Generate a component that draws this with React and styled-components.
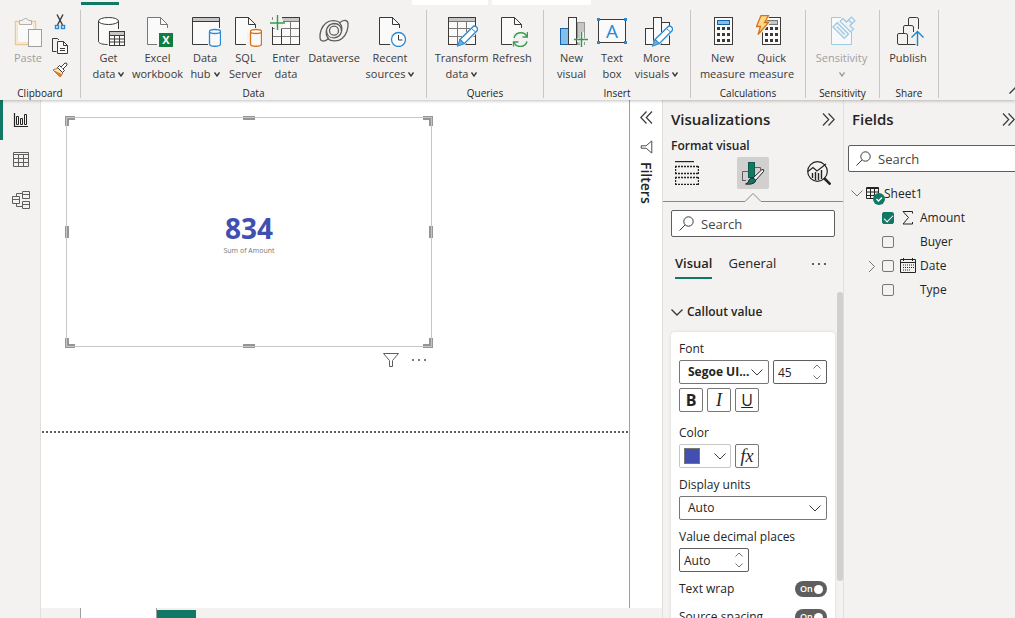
import React, { useState } from "react";
import styled, { createGlobalStyle } from "styled-components";

const GlobalStyle = createGlobalStyle`
  * { box-sizing: border-box; }
  body {
    margin: 0;
    background: #f3f2f1;
    color: #252423;
    font-family: "Open Sans", "Noto Sans", sans-serif;
    font-size: 12px;
    line-height: 16px;
  }
  button, input, select { font: inherit; color: inherit; }
  button { padding: 0; border: 0; background: none; cursor: pointer; }
  svg { display: block; flex: none; }
`;

const DARK = "#3b3a39";
const GREEN = "#117865";

/* ---------- icons ---------- */

const Svg = ({ w = 32, h = w, children, ...rest }) => (
  <svg width={w} height={h} viewBox={`0 0 ${w} ${h}`} fill="none" stroke={DARK} aria-hidden="true" {...rest}>
    {children}
  </svg>
);

const Chevron = ({ w = 12, h = 7, color = DARK, width = 1 }) => (
  <Svg w={w} h={h} stroke={color} strokeWidth={width}>
    <path d={`M0.5 0.5 L${w / 2} ${h - 1} L${w - 0.5} 0.5`} />
  </Svg>
);

const DoubleChevron = ({ left }) => (
  <Svg w={13} h={13} strokeWidth="1.2">
    {left
      ? <path d="M6.5 0.5 L0.8 6.5 L6.5 12.5 M12 0.5 L6.3 6.5 L12 12.5" />
      : <path d="M1 0.5 L6.7 6.5 L1 12.5 M6.5 0.5 L12.2 6.5 L6.5 12.5" />}
  </Svg>
);

const Page = ({ stroke = DARK, cut }) => (
  <>
    <path d="M5.5 2.5 H18.5 L25.5 9.5 V18 H17 V29.5 H5.5 Z" fill="#fafafa" stroke="none" />
    <path d={`M${cut || 16} 29.5 H5.5 V2.5 H18.5 L25.5 9.5 V13 M18.5 2.5 V9.5 H25.5`} stroke={stroke} />
  </>
);

const Cylinder = ({ color }) => (
  <>
    <path d="M20.5 17 V29 C20.5 32 31.5 32 31.5 29 V17" fill="#fafafa" stroke={color} strokeWidth="1.3" />
    <ellipse cx="26" cy="16.5" rx="5.5" ry="2" fill="#fff" stroke={color} strokeWidth="1.3" />
  </>
);

const Table = () => (
  <>
    <rect x="2.5" y="2.5" width="27" height="27" fill="#fafafa" />
    <rect x="3" y="3" width="26" height="3" fill="#c8c6c4" stroke="none" />
    <path d="M2.5 6.5 H29.5 M2.5 13.5 H29.5 M2.5 21.5 H29.5 M11.5 6.5 V29.5 M20.5 6.5 V29.5" stroke="#797775" />
    <rect x="2.5" y="2.5" width="27" height="27" />
  </>
);

const Pencil = () => (
  <>
    <path d="M13 24.5 L26 11.5 L32 17 L18 31 L11 32 Z" fill="#f3f2f1" stroke="none" />
    <path d="M14 24.5 L26.5 12.2 A2.7 2.7 0 0 1 30.8 16 L18.2 28.7 Z" fill="#fff" stroke="#2b88d0" strokeWidth="1.3" />
    <path d="M14 24.5 L18.2 28.7 L11.3 31.3 Z" fill="#69afe5" stroke="#2b88d0" />
    <path d="M25.5 13.5 L29.5 17" stroke="#2b88d0" />
  </>
);

const Keys = ({ x = 10 }) => (
  <path
    d={[12, 18, 24].map((y) => `M${x} ${y}h3v3h-3z M${x + 5} ${y}h3v3h-3z M${x + 10} ${y}h3v3h-3z`).join(" ")}
    fill={DARK}
    stroke="none"
  />
);

const ribbonIcons = {
  paste: (
    <Svg>
      <path d="M3.5 6.5 H23.5 V29.5 H3.5 Z" fill="#fbf4e9" stroke="#eac796" strokeWidth="1.4" />
      <path d="M5.5 8.5 H21.5 V27.5 H5.5 Z" fill="#fafafa" stroke="#f5e3c6" />
      <path d="M7.5 9.5 V5.5 H10.5 A3.2 3.2 0 0 1 16.5 5.5 H19.5 V9.5 Z" fill="#f3f2f1" stroke="#b3b0ad" />
      <rect x="16.5" y="14.5" width="13" height="17" fill="#fafafa" stroke="#a19f9d" />
    </Svg>
  ),
  database: (
    <Svg>
      <path d="M5.5 6 V26.5 C6 29 10 30 14.5 30 V17 H25.5 V6" fill="#fafafa" stroke="none" />
      <path d="M5.5 6 V26.5 C6 28.6 10 29.5 14.5 29.5 M25.5 6 V14" />
      <ellipse cx="15.5" cy="6" rx="10" ry="3.5" fill="#fff" />
      <rect x="16.5" y="16.5" width="15" height="14" fill="#fafafa" />
      <rect x="17" y="17" width="14" height="3" fill="#c8c6c4" stroke="none" />
      <path d="M16.5 20.5 H31.5 M16.5 24 H31.5 M16.5 27 H31.5 M21.5 20.5 V30.5 M26.5 20.5 V30.5" />
    </Svg>
  ),
  excel: (
    <Svg>
      <Page stroke="#797775" cut={15} />
      <rect x="17" y="18" width="14" height="14" fill="#107c41" stroke="none" />
      <text x="24" y="29" textAnchor="middle" fontSize="11" fontWeight="700" fill="#fff" stroke="none">X</text>
    </Svg>
  ),
  hub: (
    <Svg>
      <path d="M19 29.5 H3.5 V2.5 H30.5 V13" fill="#fafafa" />
      <rect x="4" y="3" width="26" height="3" fill="#c8c6c4" stroke="none" />
      <path d="M3.5 6.5 H30.5" />
      <Cylinder color="#2b88d0" />
    </Svg>
  ),
  sql: <Svg><Page /><Cylinder color="#d87314" /></Svg>,
  enter: (
    <Svg>
      <Table />
      <path d="M0 4.5 H13 V12 H0 Z M2 0 H12 V15 H5 Z" fill="#f3f2f1" stroke="none" />
      <path d="M2.5 14 V29.5 M11.5 13.5 V29.5" />
      <path d="M7.5 0 V15 M0 8 H15" stroke="#2f9e4c" strokeWidth="1.4" />
    </Svg>
  ),
  dataverse: (
    <Svg strokeWidth="1.3" stroke="#605e5c">
      <circle cx="16" cy="15.7" r="4.5" />
      <path d="M22.5 8 C19 5 12 4.5 8 8 C3.5 11.5 1.5 18 2 23 C2.5 27 7 27 10.5 23.5 C6.5 19 7.5 9.500 16 8.5 C21 8.5 23.5 12 23.5 16" />
      <path d="M9.5 23.4 C13 26.4 20 26.9 24 23.4 C28.5 19.9 30.5 13.4 30 8.4 C29.5 4.4 25 4.4 21.5 7.9 C25.5 12.4 24.5 21.9 16 22.9 C11 22.9 8.5 19.4 8.5 15.4" />
    </Svg>
  ),
  recent: (
    <Svg>
      <Page />
      <circle cx="24.5" cy="24.5" r="7" fill="#fff" stroke="#2b88d0" strokeWidth="1.3" />
      <path d="M24.5 20 V25 H28.5" />
    </Svg>
  ),
  transform: <Svg><Table /><Pencil /></Svg>,
  refresh: (
    <Svg>
      <Page />
      <path d="M18 23 A7 7 0 0 1 31 21.5 M31.5 17 V22 H26.5 M31 26.5 A7 7 0 0 1 18 27.5 M17.5 31.5 V27 H22.5" stroke="#3a9b52" strokeWidth="1.4" />
    </Svg>
  ),
  newVisual: (
    <Svg>
      <rect x="4.5" y="13.5" width="8" height="16" fill="#83beec" stroke="#1664a7" />
      <rect x="21.5" y="7.5" width="7" height="22" fill="#c8c6c4" stroke="#979593" />
      <rect x="12.5" y="2.5" width="8" height="27" fill="#fafafa" />
      <path d="M17 23 H24 V17 H28 V23 H32 V27 H28 V32 H24 V27 H17 Z" fill="#f3f2f1" stroke="none" />
      <path d="M20.5 20 V29.5" />
      <path d="M25.5 17 V32 M18 24.5 H32" stroke="#2f9e4c" strokeWidth="1.4" />
    </Svg>
  ),
  textBox: (
    <Svg>
      <rect x="2.5" y="4.5" width="27" height="23" fill="#fafafa" />
      <path d="M1 3h3v3h-3z M28 3h3v3h-3z M1 26h3v3h-3z M28 26h3v3h-3z" fill="#2b88d0" stroke="none" />
      <text x="16" y="23" textAnchor="middle" fontSize="19" fill="#2b88d0" stroke="none">A</text>
    </Svg>
  ),
  moreVisuals: (
    <Svg>
      <rect x="4.5" y="13.5" width="8" height="16" fill="#fafafa" />
      <rect x="20.5" y="7.5" width="8" height="22" fill="#fafafa" />
      <rect x="12.5" y="2.5" width="8" height="27" fill="#fafafa" />
      <Pencil />
    </Svg>
  ),
  newMeasure: (
    <Svg>
      <rect x="7.5" y="2.5" width="18" height="27" fill="#fafafa" />
      <rect x="10.5" y="5.5" width="12" height="4" fill="#83beec" stroke="#1664a7" />
      <Keys />
    </Svg>
  ),
  quickMeasure: (
    <Svg>
      <rect x="6.5" y="2.5" width="18" height="27" fill="#fafafa" />
      <rect x="10.5" y="5.5" width="11" height="4" fill="#c8c6c4" stroke="#797775" />
      <Keys x={9} />
      <path d="M4 -1 H15 L10 7 H15 L1 24 L4 14 H-2 Z" fill="#f3f2f1" stroke="none" />
      <path d="M5 0.5 H12.5 L8.5 7.5 H12.5 L2 19.5 L4.5 11.5 H0.5 Z" fill="#fcd98a" stroke="#d87314" strokeWidth="1.3" />
    </Svg>
  ),
  sensitivity: (
    <Svg stroke="#9ccae4">
      <path d="M15 2.5 H5.5 V29.5 H25.5 V17" fill="#f7f9fa" />
      <g transform="rotate(45 19 12)" strokeWidth="1.3">
        <rect x="10.5" y="14.5" width="16" height="6" fill="#f3f2f1" />
        <path d="M13 17.5 H24" />
        <path d="M11.5 11.5 V7.5 H16.5 V0.5 H21.5 V7.5 H26.5 V11.5 Z" fill="#f3f2f1" />
        <path d="M16.5 4.5 H21.5" />
      </g>
    </Svg>
  ),
  publish: (
    <Svg>
      <path d="M16.5 10 V4 Q16.5 2.5 18 2.5 H24.5 Q26.5 2.5 26.5 4 V14" />
      <path d="M11.5 18 V12 Q11.5 10.5 13 10.5 H19 Q21.5 10.5 21.5 12 V17" />
      <path d="M5.5 28 V20 Q5.5 18.5 7 18.5 H13.5 Q15.5 18.5 15.5 20 V29.5 H7 Q5.5 29.5 5.5 28 M15.5 29.5 H23.5" />
      <path d="M25.5 31 V16.5 M19.5 22.5 L25.5 16.5 L31.5 22.5" stroke="#1a86c8" strokeWidth="1.4" />
    </Svg>
  ),
};

const CutIcon = () => (
  <Svg w={16}>
    <path d="M5 0.5 L10.5 11 M11 0.5 L5.5 11" strokeWidth="1.4" />
    <rect x="3.5" y="11.5" width="3" height="3" fill="#fff" stroke="#2b88d0" strokeWidth="1.4" />
    <rect x="9.5" y="11.5" width="3" height="3" fill="#fff" stroke="#2b88d0" strokeWidth="1.4" />
  </Svg>
);

const CopyIcon = () => (
  <Svg w={16}>
    <path d="M4.5 13.5 H0.5 V0.5 H5.5 L7 2" />
    <path d="M5.5 3.5 H11.5 L15.5 7.5 V15.5 H5.5 Z" fill="#fafafa" />
    <path d="M11.5 3.5 V7.5 H15.5 M8 10.5 H13 M8 12.5 H13" />
  </Svg>
);

const BrushIcon = () => (
  <Svg w={16}>
    <path d="M1 8 L6 6 L11 11 L8 15 Z" fill="#fbe3c0" stroke="#d87314" />
    <path d="M3 9.5 L9.5 12.5 L8 15 Z" fill="#e8872a" stroke="#d87314" />
    <path d="M5.5 5.5 L7.5 3.5 L12.5 8.5 L10.5 10.5 Z" fill="#fff" />
    <path d="M9 5 L13 1 Q15.5 0.5 15 3 L11 7" fill="#fff" />
  </Svg>
);

const SearchIcon = () => (
  <Svg w={15}>
    <circle cx="9.5" cy="5.5" r="4.7" />
    <path d="M6 9 L0.5 14.5" />
  </Svg>
);

const FunnelIcon = ({ w = 16, color = "#605e5c" }) => (
  <Svg w={w} h={14} stroke={color} viewBox="0 0 16 14">
    <path d="M0.5 0.5 H15.5 L9.5 7.5 V13.5 H6.5 V7.5 Z" />
  </Svg>
);

const Dots = ({ color = "#605e5c" }) => (
  <Svg w={16} h={4} stroke="none" fill={color}>
    <path d="M1 1h2v2h-2z M7 1h2v2h-2z M13 1h2v2h-2z" />
  </Svg>
);

const ReportIcon = () => (
  <Svg w={16} stroke="#252423">
    <path d="M1.5 1 V14.5 H15" strokeWidth="1.2" />
    <path d="M3.5 4.5 h2 v8 h-2z M7.5 6.5 h2 v6 h-2z M11.5 2.5 h2 v10 h-2z" />
  </Svg>
);

const DataIcon = () => (
  <Svg w={16} stroke="#605e5c">
    <path d="M0.5 0.5 H15.5 V14.5 H0.5 Z M0.5 2.5 H15.5 M0.5 6.5 H15.5 M0.5 10.5 H15.5 M5.5 2.5 V14.5 M10.5 2.5 V14.5" />
  </Svg>
);

const ModelIcon = () => (
  <Svg w={18} stroke="#605e5c">
    <path d="M10.5 0.5 h7 v7 h-7z M10.5 3.5 h7 M10.5 10.5 h7 v7 h-7z M10.5 13.5 h7 M0.5 5.5 h7 v7 h-7z M0.5 8.5 h7 M4.5 5.5 V2.5 H10.5 M4.5 12.5 V15.5 H10.5" />
  </Svg>
);

const BuildIcon = () => (
  <Svg w={24} stroke="#252423">
    <path d="M0 0.5 H19" strokeWidth="1.4" />
    <path d="M0 5.5 H24 M0 12.5 H24 M0 16.5 H24 M0 23.5 H24" strokeDasharray="2 1" strokeWidth="1.4" />
    <path d="M0.5 5 V13 M23.5 5 V13 M0.5 16 V24 M23.5 16 V24" strokeDasharray="2 1" strokeWidth="1.4" />
  </Svg>
);

const FormatIcon = () => (
  <Svg w={24}>
    <path d="M1.5 20 V10.5 H7 M14 6.5 H19.5 V9 M1.5 19.5 H5" stroke="#605e5c" />
    <rect x="7.5" y="1.5" width="6" height="15" fill={GREEN} stroke="#0b5a4c" />
    <path d="M21 8.5 Q23.5 8 22.5 10.5 L14.5 19.5 L11.5 17.5 Z" fill="#f3f2f1" stroke="#252423" />
    <path d="M11 17 Q15 17.5 14.5 20.5 Q12 24 4.5 23 Q8 22 8 19 Q9 17 11 17 Z" fill={GREEN} stroke="#252423" />
  </Svg>
);

const AnalyticsIcon = () => (
  <Svg w={24} stroke="#252423">
    <circle cx="10.500" cy="10.500" r="9.8" strokeWidth="1.2" />
    <path d="M1 10.5 L6 6.5 L10 10 L19 3" strokeWidth="1.2" />
    <path d="M5.5 12 V17 M8.5 11 V19 M11.5 12 V19 M14.5 9 V18" strokeWidth="1.4" />
    <path d="M17 17 L23.5 23.5" strokeWidth="2.6" />
  </Svg>
);

const SheetIcon = () => (
  <Svg w={20} stroke="#252423">
    <path d="M0.5 1.5 H12.5 V12.5 H0.5 Z M0.5 2.5 H12.5 M0.5 6 H12.5 M0.5 9.5 H12.5 M4.5 2.5 V12.5 M8.5 2.5 V12.5" />
    <circle cx="13" cy="13" r="6" fill={GREEN} stroke="none" />
    <path d="M10.5 13 L12.5 15 L16 11.5" stroke="#fff" strokeWidth="1.3" />
  </Svg>
);

const SigmaIcon = () => (
  <Svg w={16} stroke="#252423">
    <path d="M12.5 3.5 V1.5 H3 L8.5 7.5 L3 14 H12.5 V12" />
  </Svg>
);

const CalendarIcon = () => (
  <Svg w={16} stroke="#252423">
    <path d="M0.5 1.5 H15.5 V14.5 H0.5 Z M0.5 4.5 H15.5 M3.5 0 V3 M12.5 0 V3" />
    <path d="M3 7 H14 M3 9.5 H14 M3 12 H11" strokeDasharray="1 1" />
  </Svg>
);

/* ---------- ribbon ---------- */

const Shell = styled.div`
  display: flex;
  flex-direction: column;
  height: 100vh;
  overflow: hidden;
`;

const Ribbon = styled.header`
  display: grid;
  grid-template-rows: 10px 88px;
  flex: none;
  height: 100px;
  background: #f3f2f1;
  box-shadow: 0 1px 3px rgba(0, 0, 0, 0.25);
  z-index: 1;
`;

const TabStrip = styled.div`
  display: flex;
  align-items: flex-start;
  padding-left: 81px;
`;

const ActiveTabMark = styled.div`
  width: 38px;
  height: 3px;
  margin: 2px 293px 0 0;
  background: ${GREEN};
`;

const ContextTab = styled.div`
  width: ${(p) => p.$width}px;
  height: 5px;
  margin-right: 4px;
  background: #fff;
`;

const Groups = styled.div`
  display: flex;
`;

const Group = styled.section`
  display: flex;
  flex-direction: column;
  justify-content: space-between;
  flex: none;
  width: ${(p) => p.$width}px;
  border-right: 1px solid #c8c6c4;
`;

const GroupItems = styled.div`
  display: flex;
  justify-content: center;
  padding: 5px 2px 0 0;
`;

const GroupName = styled.div`
  font-size: 10px;
  line-height: 10px;
  text-align: center;
  white-space: nowrap;
`;

const RibbonButton = styled.button`
  display: flex;
  flex-direction: column;
  align-items: center;
  gap: 3px;
  width: ${(p) => p.$width}px;
  color: ${(p) => (p.disabled ? "#a19f9d" : "#3b3a39")};
  font-size: 11px;
`;

const RibbonLine = styled.span`
  display: flex;
  align-items: center;
  gap: 3px;
  height: 16px;
  white-space: nowrap;
`;

const RibbonLabel = styled.span`
  display: flex;
  flex-direction: column;
  align-items: center;
`;

const SmallTools = styled.div`
  display: flex;
  flex-direction: column;
  gap: 8px;
  margin: -1px 2px 0 4px;
`;

const CollapseButton = styled.button`
  align-self: flex-end;
  margin: 0 -6px 4px auto;
  transform: rotate(180deg);
`;

const groups = [
  { name: "Data", width: 346, items: [
    { icon: "database", lines: ["Get", "data"], menu: true, width: 43 },
    { icon: "excel", lines: ["Excel", "workbook"], width: 55 },
    { icon: "hub", lines: ["Data", "hub"], menu: true, width: 40 },
    { icon: "sql", lines: ["SQL", "Server"], width: 41 },
    { icon: "enter", lines: ["Enter", "data"], width: 40 },
    { icon: "dataverse", lines: ["Dataverse"], width: 56 },
    { icon: "recent", lines: ["Recent", "sources"], menu: true, width: 56 },
  ] },
  { name: "Queries", width: 117, items: [
    { icon: "transform", lines: ["Transform", "data"], menu: true, width: 56 },
    { icon: "refresh", lines: ["Refresh"], width: 45 },
  ] },
  { name: "Insert", width: 147, items: [
    { icon: "newVisual", lines: ["New", "visual"], width: 39 },
    { icon: "textBox", lines: ["Text", "box"], width: 42 },
    { icon: "moreVisuals", lines: ["More", "visuals"], menu: true, width: 47 },
  ] },
  { name: "Calculations", width: 115, items: [
    { icon: "newMeasure", lines: ["New", "measure"], width: 49 },
    { icon: "quickMeasure", lines: ["Quick", "measure"], width: 49 },
  ] },
  { name: "Sensitivity", width: 74, items: [
    { icon: "sensitivity", lines: ["Sensitivity", ""], menu: true, width: 59, disabled: true },
  ] },
  { name: "Share", width: 59, items: [
    { icon: "publish", lines: ["Publish"], width: 44 },
  ] },
];

const RibbonItem = ({ icon, lines, menu, width, disabled }) => (
  <RibbonButton $width={width} disabled={disabled}>
    {ribbonIcons[icon]}
    <RibbonLabel>
      {lines.map((line, i) => (
        <RibbonLine key={i}>
          {line}
          {menu && i === lines.length - 1 && (
            <Chevron w={6} h={5} width={1.4} color={disabled ? "#a19f9d" : DARK} />
          )}
        </RibbonLine>
      ))}
    </RibbonLabel>
  </RibbonButton>
);

/* ---------- workspace ---------- */

const Workspace = styled.div`
  display: flex;
  flex: 1;
  min-height: 0;
`;

const ViewRail = styled.nav`
  flex: none;
  width: 41px;
  border-right: 1px solid #e1dfdd;
`;

const ViewButton = styled.button`
  display: flex;
  align-items: center;
  justify-content: center;
  width: 40px;
  height: 40px;
  padding-right: 2px;
  border-left: 3px solid ${(p) => (p.$active ? GREEN : "transparent")};
`;

const ReportArea = styled.main`
  display: flex;
  flex-direction: column;
  flex: 1;
  min-width: 0;
`;

const ReportRow = styled.div`
  display: flex;
  flex: 1;
  min-height: 0;
  background: #fff;
`;

const Canvas = styled.div`
  flex: 1;
  min-width: 0;
  padding-top: 17px;
  border-right: 1px solid #a19f9d;
`;

const VisualFrame = styled.article`
  position: relative;
  display: flex;
  flex-direction: column;
  align-items: center;
  width: 366px;
  height: 230px;
  margin-left: 25px;
  padding-top: 92px;

  &::after {
    content: "";
    position: absolute;
    inset: 0;
    border: 1px solid #c8c6c4;
  }
`;

const Corner = styled.span`
  position: absolute;
  width: 10px;
  height: 10px;
  border: 0 solid #979593;
  ${(p) => p.$v}: -1px;
  ${(p) => p.$h}: -1px;
  border-${(p) => p.$v}-width: 4px;
  border-${(p) => p.$h}-width: 4px;
`;

const EdgeHandle = styled.span`
  position: absolute;
  background: #979593;
  ${(p) => p.$side}: -1px;
  ${(p) => (p.$side === "top" || p.$side === "bottom"
    ? "left: calc(50% - 6px); width: 12px; height: 4px;"
    : "top: calc(50% - 6px); width: 4px; height: 12px;")}
`;

const CalloutNumber = styled.div`
  color: #414fb1;
  font-size: 28px;
  font-weight: 700;
  line-height: 38px;
`;

const CalloutCaption = styled.div`
  color: #797775;
  font-size: 7px;
  line-height: 8px;
`;

const VisualActions = styled.div`
  display: flex;
  align-items: center;
  justify-content: flex-end;
  gap: 12px;
  width: 366px;
  height: 26px;
  margin: 0 0 58px 20px;
`;

const PageBreak = styled.div`
  height: 2px;
  margin: 0 1px;
  background: repeating-linear-gradient(90deg, #605e5c 0 2px, transparent 2px 4px);
`;

const FiltersPane = styled.aside`
  display: flex;
  flex-direction: column;
  align-items: center;
  gap: 16px;
  flex: none;
  width: 32px;
  padding-top: 11px;
`;

const FiltersTitle = styled.div`
  display: flex;
  align-items: center;
  gap: 8px;
  writing-mode: vertical-rl;
  font-size: 14px;
  font-weight: 600;
  line-height: 20px;

  svg { transform: rotate(90deg); }
`;

const PageTabs = styled.footer`
  display: flex;
  flex: none;
  height: 10px;
  padding-left: 39px;
`;

const PageTab = styled.div`
  width: 77px;
  background: #fff;
  border: solid #a19f9d;
  border-width: 0 1px;
`;

const NewPageTab = styled.div`
  width: 39px;
  margin-top: 2px;
  background: ${GREEN};
`;

/* ---------- panes ---------- */

const Pane = styled.aside`
  display: flex;
  flex-direction: column;
  flex: none;
  width: ${(p) => p.$width}px;
  border-left: 1px solid #e1dfdd;
  overflow: hidden;
`;

const PaneHeader = styled.div`
  display: flex;
  align-items: center;
  justify-content: space-between;
  height: 38px;
  padding: 0 8px;
`;

const PaneTitle = styled.h2`
  margin: 0;
  font-size: 15px;
  font-weight: 600;
  line-height: 20px;
`;

const SubTitle = styled.h3`
  margin: 0;
  padding: 0 8px;
  font-size: 12px;
  font-weight: 600;
  line-height: 16px;
`;

const ModeRow = styled.div`
  display: flex;
  justify-content: space-between;
  padding: 3px 8px 0;
`;

const ModeButton = styled.button`
  display: grid;
  place-items: center;
  width: 32px;
  height: 32px;
  border-radius: 2px;
  background: ${(p) => (p.$active ? "#d2d0ce" : "none")};
`;

const Divider = styled.svg`
  width: 100%;
  height: 9px;
  margin-top: 4px;
`;

const SearchBox = styled.label`
  display: flex;
  align-items: center;
  gap: 7px;
  flex: none;
  height: 27px;
  margin: ${(p) => p.$margin};
  padding-left: 7px;
  border: 1px solid #605e5c;
  border-radius: 2px;
  background: #fff;

  input {
    width: 100%;
    min-width: 0;
    padding: 0;
    border: 0;
    outline: 0;
    background: none;
    font-size: 13px;
  }
  input::placeholder { color: #484644; opacity: 1; }
`;

const FormatTabs = styled.div`
  display: flex;
  align-items: center;
  gap: 16px;
  height: 30px;
  margin: 12px 8px 0 12px;
`;

const FormatTab = styled.button`
  height: 30px;
  padding-bottom: 1px;
  border-bottom: 2px solid ${(p) => (p.$active ? GREEN : "transparent")};
  font-size: 13px;
  font-weight: ${(p) => (p.$active ? 600 : 400)};
`;

const MoreButton = styled.button`
  margin-left: auto;
  padding-right: 8px;
`;

const Scroller = styled.div`
  display: grid;
  grid-template-columns: 1fr 6px;
  gap: 2px;
  flex: 1;
  min-height: 0;
  margin-top: 13px;
  padding-left: 8px;
  overflow: hidden;
`;

const ScrollThumb = styled.div`
  height: 289px;
  border-radius: 3px;
  background: #d2d0ce;
`;

const SectionToggle = styled.button`
  display: flex;
  align-items: center;
  gap: 4px;
  width: 100%;
  height: 40px;
  font-weight: 600;
`;

const Card = styled.div`
  padding: 9px 8px 24px;
  border-radius: 4px;
  background: #fff;
  box-shadow: 0 0 3px rgba(0, 0, 0, 0.12);
`;

const Label = styled.label`
  display: block;
  padding-bottom: 3px;
  line-height: 16px;
  white-space: nowrap;
`;

const Row = styled.div`
  display: flex;
  gap: 4px;
  margin-bottom: ${(p) => p.$space || 0}px;
`;

const Control = styled.div`
  position: relative;
  flex: ${(p) => (p.$width ? "none" : "1")};
  width: ${(p) => (p.$width ? `${p.$width}px` : "auto")};
  height: 24px;

  select, input {
    width: 100%;
    height: 24px;
    padding: 0 4px;
    border: 1px solid #605e5c;
    border-radius: 2px;
    background: #fff;
    appearance: none;
    outline: 0;
  }
  select {
    padding-left: 8px;
    border-color: #797775;
    font-weight: ${(p) => (p.$bold ? 700 : 400)};
  }
`;

const Adornment = styled.span`
  position: absolute;
  top: 0;
  right: 6px;
  display: grid;
  align-content: center;
  gap: ${(p) => p.$gap || 0}px;
  height: 24px;
  pointer-events: none;

  svg:first-child:not(:last-child) { transform: rotate(180deg); }
`;

const ColorPicker = styled.button`
  display: flex;
  align-items: center;
  justify-content: space-between;
  width: 52px;
  height: 24px;
  padding: 0 4px;
  border: 1px solid #c8c6c4;
  border-radius: 2px;
`;

const Swatch = styled.span`
  width: 16px;
  height: 16px;
  border: 1px solid #797775;
  background: #414fb1;
`;

const SquareButton = styled.button`
  width: 24px;
  height: 24px;
  border: 1px solid #797775;
  border-radius: 2px;
  background: #fff;
  font-size: ${(p) => (p.$serif ? 18 : 16)}px;
  line-height: 20px;
  font-weight: ${(p) => (p.$bold ? 700 : 400)};
  font-style: ${(p) => (p.$serif ? "italic" : "normal")};
  font-family: ${(p) => (p.$serif ? '"Liberation Serif", serif' : "inherit")};
  text-decoration: ${(p) => (p.$underline ? "underline" : "none")};
`;

const SwitchRow = styled.label`
  display: flex;
  align-items: center;
  justify-content: space-between;
  height: 16px;
  margin-bottom: 12px;
  white-space: nowrap;
`;

const Switch = styled.span`
  position: relative;
  display: flex;
  align-items: center;
  justify-content: space-between;
  width: 32px;
  height: 16px;
  padding: 0 4px 0 5px;
  border-radius: 8px;
  background: #605e5c;
  color: #fff;
  font-size: 9px;
  font-weight: 600;

  input {
    position: absolute;
    inset: 0;
    margin: 0;
    opacity: 0;
  }
  &::after {
    content: "";
    width: 9px;
    height: 9px;
    border-radius: 50%;
    background: #fff;
  }
`;

const Tree = styled.ul`
  margin: 9px 0 0;
  padding: 0 0 0 7px;
  list-style: none;
`;

const TreeTable = styled.li`
  display: grid;
  grid-template-columns: 15px 18px auto;
  align-items: center;
  height: 25px;

  svg:nth-child(2) { align-self: start; margin-top: 5px; }
`;

const TreeField = styled.li`
  display: grid;
  grid-template-columns: 16px 18px 20px auto;
  align-items: center;
  height: 24px;
  padding-left: 15px;
`;

const ExpandButton = styled.button`
  width: 12px;
  transform: rotate(-90deg);
`;

const Check = styled.input`
  display: grid;
  place-items: center;
  width: 12px;
  height: 12px;
  margin: 0;
  border: 1px solid #797775;
  border-radius: 2px;
  appearance: none;

  &:checked {
    border-color: ${GREEN};
    background: ${GREEN};
  }
  &:checked::after {
    content: "";
    width: 8px;
    height: 4px;
    border: solid #fff;
    border-width: 0 0 1px 1px;
    transform: translateY(-1px) rotate(-45deg);
  }
`;

const fields = [
  { name: "Amount", icon: <SigmaIcon /> },
  { name: "Buyer" },
  { name: "Date", icon: <CalendarIcon />, expandable: true },
  { name: "Type" },
];

const SelectBox = ({ id, width, bold, options }) => (
  <Control $width={width} $bold={bold}>
    <select id={id}>
      {options.map((option) => <option key={option}>{option}</option>)}
    </select>
    <Adornment><Chevron /></Adornment>
  </Control>
);

const Spinner = ({ id, width, value, label }) => (
  <Control $width={width}>
    <input id={id} aria-label={label} defaultValue={value} />
    <Adornment $gap={6}>
      <Chevron w={8} h={5} color="#797775" />
      <Chevron w={8} h={5} color="#797775" />
    </Adornment>
  </Control>
);

const OnSwitch = ({ label }) => (
  <SwitchRow>
    {label}
    <Switch>
      <input type="checkbox" role="switch" defaultChecked />
      On
    </Switch>
  </SwitchRow>
);

const FormatPane = () => (
  <Pane $width={181}>
    <PaneHeader>
      <PaneTitle>Visualizations</PaneTitle>
      <button aria-label="Collapse"><DoubleChevron /></button>
    </PaneHeader>
    <SubTitle>Format visual</SubTitle>
    <ModeRow>
      <ModeButton aria-label="Build visual"><BuildIcon /></ModeButton>
      <ModeButton aria-label="Format visual" $active><FormatIcon /></ModeButton>
      <ModeButton aria-label="Analytics"><AnalyticsIcon /></ModeButton>
    </ModeRow>
    <Divider viewBox="0 0 180 9" fill="none" stroke="#8a8886">
      <path d="M0 8.5 H82 L90 0.5 L98 8.5 H180" />
    </Divider>
    <SearchBox $margin="8px 8px 0">
      <SearchIcon />
      <input aria-label="Search format options" placeholder="Search" />
    </SearchBox>
    <FormatTabs>
      <FormatTab $active>Visual</FormatTab>
      <FormatTab>General</FormatTab>
      <MoreButton aria-label="More options"><Dots /></MoreButton>
    </FormatTabs>
    <Scroller>
      <div>
        <SectionToggle>
          <Chevron width={1.4} />
          Callout value
        </SectionToggle>
        <Card>
          <Label htmlFor="font">Font</Label>
          <Row $space={4}>
            <SelectBox id="font" width={90} bold options={["Segoe UI..."]} />
            <Spinner width={54} value="45" label="Font size" />
          </Row>
          <Row $space={13}>
            <SquareButton $bold>B</SquareButton>
            <SquareButton $serif>I</SquareButton>
            <SquareButton $underline>U</SquareButton>
          </Row>
          <Label htmlFor="color">Color</Label>
          <Row $space={9}>
            <ColorPicker id="color" aria-haspopup="true"><Swatch /><Chevron /></ColorPicker>
            <SquareButton $serif>fx</SquareButton>
          </Row>
          <Label htmlFor="units">Display units</Label>
          <Row $space={9}>
            <SelectBox id="units" options={["Auto"]} />
          </Row>
          <Label htmlFor="places">Value decimal places</Label>
          <Row $space={9}>
            <Spinner id="places" width={70} value="Auto" />
          </Row>
          <OnSwitch label="Text wrap" />
          <OnSwitch label="Source spacing" />
        </Card>
      </div>
      <ScrollThumb />
    </Scroller>
  </Pane>
);

const FieldsPane = () => {
  const [checked, setChecked] = useState(["Amount"]);

  const toggle = (name) => {
    setChecked(checked.includes(name) ? checked.filter((n) => n !== name) : [...checked, name]);
  };

  return (
    <Pane $width={172}>
      <FieldsHeader>
        <PaneTitle>Fields</PaneTitle>
        <button aria-label="Collapse"><DoubleChevron /></button>
      </FieldsHeader>
      <SearchBox $margin="7px -8px 0 4px">
        <SearchIcon />
        <input aria-label="Search fields" placeholder="Search" />
      </SearchBox>
      <Tree>
        <TreeTable>
          <Chevron color="#797775" />
          <SheetIcon />
          Sheet1
        </TreeTable>
        {fields.map(({ name, icon, expandable }) => (
          <TreeField key={name}>
            <span>{expandable && <ExpandButton aria-label="Expand"><Chevron color="#797775" /></ExpandButton>}</span>
            <Check id={name} type="checkbox" checked={checked.includes(name)} onChange={() => toggle(name)} />
            <span>{icon}</span>
            <label htmlFor={name}>{name}</label>
          </TreeField>
        ))}
      </Tree>
    </Pane>
  );
};

const FieldsHeader = styled(PaneHeader)`
  padding-right: 0;
`;

const App = () => (
  <Shell>
    <GlobalStyle />
    <Ribbon>
      <TabStrip>
        <ActiveTabMark />
        <ContextTab $width={76} />
        <ContextTab $width={99} />
      </TabStrip>
      <Groups>
        <Group $width={81}>
          <GroupItems>
            <RibbonItem icon="paste" lines={["Paste"]} width={40} disabled />
            <SmallTools>
              <button aria-label="Cut"><CutIcon /></button>
              <button aria-label="Copy"><CopyIcon /></button>
              <button aria-label="Format painter"><BrushIcon /></button>
            </SmallTools>
          </GroupItems>
          <GroupName>Clipboard</GroupName>
        </Group>
        {groups.map(({ name, width, items }) => (
          <Group key={name} $width={width}>
            <GroupItems>
              {items.map((item) => <RibbonItem key={item.icon} {...item} />)}
            </GroupItems>
            <GroupName>{name}</GroupName>
          </Group>
        ))}
        <CollapseButton aria-label="Collapse ribbon"><Chevron width={1.4} /></CollapseButton>
      </Groups>
    </Ribbon>

    <Workspace>
      <ViewRail>
        <ViewButton $active aria-label="Report view"><ReportIcon /></ViewButton>
        <ViewButton aria-label="Data view"><DataIcon /></ViewButton>
        <ViewButton aria-label="Model view"><ModelIcon /></ViewButton>
      </ViewRail>

      <ReportArea>
        <ReportRow>
          <Canvas>
            <VisualFrame>
              {["top", "bottom"].map((v) => ["left", "right"].map((h) => <Corner key={v + h} $v={v} $h={h} />))}
              {["top", "right", "bottom", "left"].map((side) => <EdgeHandle key={side} $side={side} />)}
              <CalloutNumber>834</CalloutNumber>
              <CalloutCaption>Sum of Amount</CalloutCaption>
            </VisualFrame>
            <VisualActions>
              <button aria-label="Filters"><FunnelIcon /></button>
              <button aria-label="More options"><Dots color="#797775" /></button>
            </VisualActions>
            <PageBreak />
          </Canvas>
          <FiltersPane>
            <button aria-label="Expand filters"><DoubleChevron left /></button>
            <FiltersTitle>
              <FunnelIcon w={13} color="#252423" />
              Filters
            </FiltersTitle>
          </FiltersPane>
        </ReportRow>
        <PageTabs>
          <PageTab />
          <NewPageTab />
        </PageTabs>
      </ReportArea>

      <FormatPane />
      <FieldsPane />
    </Workspace>
  </Shell>
);

export default App;
